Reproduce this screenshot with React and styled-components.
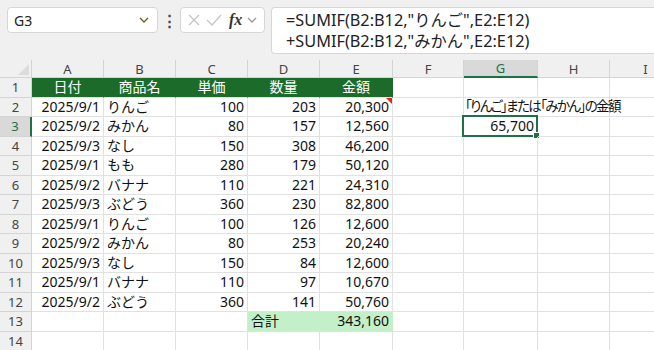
import styled, { createGlobalStyle } from "styled-components";

const GlobalStyle = createGlobalStyle`
  body {
    margin: 0;
    background: #f0f0f0;
    font-family: "Noto Sans", "Noto Sans CJK JP", sans-serif;
    overflow: hidden;
  }
`;

const COLS = ["A", "B", "C", "D", "E", "F", "G", "H", "I"];
const WIDTHS = [72, 72, 72, 72, 73, 71, 74, 72, 72];

const data = [
  ["2025/9/1", "りんご", 100, 203, "20,300"],
  ["2025/9/2", "みかん", 80, 157, "12,560"],
  ["2025/9/3", "なし", 150, 308, "46,200"],
  ["2025/9/1", "もも", 280, 179, "50,120"],
  ["2025/9/2", "バナナ", 110, 221, "24,310"],
  ["2025/9/3", "ぶどう", 360, 230, "82,800"],
  ["2025/9/1", "りんご", 100, 126, "12,600"],
  ["2025/9/2", "みかん", 80, 253, "20,240"],
  ["2025/9/3", "なし", 150, 84, "12,600"],
  ["2025/9/1", "バナナ", 110, 97, "10,670"],
  ["2025/9/2", "ぶどう", 360, 141, "50,760"],
];

const App = () => {
  const rows = [];
  // row 1: headers
  rows.push(["日付", "商品名", "単価", "数量", "金額", "", "", "", ""]);
  data.forEach((r, i) => {
    const extra =
      i === 0 ? ["", "「りんご」または「みかん」の金額", "", ""] :
      i === 1 ? ["", "65,700", "", ""] : ["", "", "", ""];
    rows.push([...r, ...extra]);
  });
  rows.push(["", "", "", "合計", "343,160", "", "", "", ""]);
  rows.push(["", "", "", "", "", "", "", "", ""]);

  const alignFor = (r, c) => {
    if (r === 1) return "center";
    if (c === 1 || c === 6) return r === 3 && c === 6 ? "right" : "left";
    if (r === 13 && c === 3) return "left";
    return "right";
  };

  const fillFor = (r, c) => {
    if (r === 1 && c < 5) return "#1d6b2a";
    if (r === 13 && (c === 3 || c === 4)) return "#c3f0c9";
    return null;
  };

  return (
    <>
      <GlobalStyle />
      <Toolbar>
        <NameBox>
          <span>G3</span>
          <Chevron viewBox="0 0 10 6" color="#6d5d1c">
            <path d="M1 1 L5 5 L9 1" />
          </Chevron>
        </NameBox>
        <Dots>⋮</Dots>
        <FxBox>
          <svg width="14" height="14" viewBox="0 0 14 14">
            <path d="M2 2 L12 12 M12 2 L2 12" stroke="#c4c4c4" strokeWidth="1.3" fill="none" />
          </svg>
          <svg width="16" height="14" viewBox="0 0 16 14">
            <path d="M1 7 L6 12 L15 2" stroke="#c4c4c4" strokeWidth="1.3" fill="none" />
          </svg>
          <FxLabel>fx</FxLabel>
          <Chevron viewBox="0 0 10 6" color="#9a9a9a">
            <path d="M1 1 L5 5 L9 1" />
          </Chevron>
        </FxBox>
        <FormulaBox>
          <div>=SUMIF(B2:B12,"りんご",E2:E12)</div>
          <div>+SUMIF(B2:B12,"みかん",E2:E12)</div>
        </FormulaBox>
      </Toolbar>

      <Sheet $widths={WIDTHS}>
        <Corner>
          <CornerTri />
        </Corner>
        {COLS.map((c) => (
          <ColHead key={c} $active={c === "G"}>{c}</ColHead>
        ))}
        {rows.map((row, ri) => {
          const r = ri + 1;
          return [
            <RowHead key={`h${r}`} $active={r === 3}>{r}</RowHead>,
            ...row.map((v, c) => (
              <Cell
                key={`${r}-${c}`}
                $align={alignFor(r, c)}
                $fill={fillFor(r, c)}
                $header={r === 1}
                $noRight={r === 2 && c === 6}
              >
                <Text $compact={r === 2 && c === 6}>{v}</Text>
                {r === 2 && c === 4 && <Comment />}
                {r === 3 && c === 6 && (
                  <Selection>
                    <Handle />
                  </Selection>
                )}
              </Cell>
            )),
          ];
        })}
      </Sheet>
    </>
  );
};

const Toolbar = styled.div`
  display: flex;
  align-items: flex-start;
  height: 54px;
  padding: 7px 0 0 7px;
  box-sizing: border-box;
  border-top: 2px solid #e4e4e4;
  margin-top: -2px;
`;

const NameBox = styled.div`
  width: 151px;
  height: 26px;
  box-sizing: border-box;
  background: #fff;
  border: 1px solid #d6d6d6;
  border-radius: 4px;
  display: flex;
  align-items: center;
  justify-content: space-between;
  padding: 0 8px 0 6px;
  font-size: 14px;
  color: #222;
`;

const Chevron = styled.svg`
  width: 10px;
  height: 6px;
  fill: none;
  stroke: ${(p) => p.color};
  stroke-width: 1.3;
`;

const Dots = styled.div`
  width: 22px;
  text-align: center;
  font-size: 15px;
  font-weight: bold;
  line-height: 26px;
  color: #444;
`;

const FxBox = styled.div`
  width: 85px;
  height: 26px;
  box-sizing: border-box;
  background: #fff;
  border: 1px solid #d6d6d6;
  border-radius: 4px;
  display: flex;
  align-items: center;
  gap: 5px;
  padding: 0 3px 0 6px;
`;

const FxLabel = styled.span`
  font-family: "Liberation Serif", "DejaVu Serif", serif;
  font-style: italic;
  font-weight: bold;
  font-size: 16px;
  color: #333;
  margin-left: 2px;
  line-height: 1;
`;

const FormulaBox = styled.div`
  margin-left: 6px;
  flex: 1;
  height: 47px;
  box-sizing: border-box;
  background: #fff;
  border: 1px solid #d6d6d6;
  border-right: none;
  border-radius: 4px 0 0 4px;
  padding: 2px 0 0 14px;
  font-size: 16.3px;
  line-height: 21px;
  color: #222;
  white-space: nowrap;
`;

const Sheet = styled.div`
  margin-top: 8px;
  display: grid;
  grid-template-columns: 32px ${(p) => p.$widths.map((w) => `${w}px`).join(" ")};
  grid-template-rows: 18px;
  grid-auto-rows: 19.5px;
  background: #fff;
  width: max-content;
`;

const Corner = styled.div`
  background: #f0f0f0;
  border-right: 1px solid #d4d4d4;
  border-bottom: 1px solid #d4d4d4;
  position: relative;
`;

const CornerTri = styled.div`
  position: absolute;
  right: 2px;
  bottom: 2px;
  width: 0;
  height: 0;
  border-left: 11px solid transparent;
  border-bottom: 11px solid #dcdcdc;
`;

const ColHead = styled.div`
  background: ${(p) => (p.$active ? "#d9d9d9" : "#f0f0f0")};
  color: ${(p) => (p.$active ? "#1e7145" : "#444")};
  border-right: 1px solid #d4d4d4;
  border-bottom: ${(p) => (p.$active ? "2px solid #1e7145" : "1px solid #d4d4d4")};
  font-size: 13px;
  display: flex;
  align-items: center;
  justify-content: center;
  box-sizing: border-box;
`;

const RowHead = styled.div`
  background: ${(p) => (p.$active ? "#d9d9d9" : "#f0f0f0")};
  color: ${(p) => (p.$active ? "#1e7145" : "#444")};
  border-right: ${(p) => (p.$active ? "2px solid #1e7145" : "1px solid #d4d4d4")};
  border-bottom: 1px solid #d4d4d4;
  font-size: 13px;
  display: flex;
  align-items: center;
  justify-content: center;
  box-sizing: border-box;
`;

const Cell = styled.div`
  position: relative;
  box-sizing: border-box;
  background: ${(p) => p.$fill || "transparent"};
  border-right: 1px solid
    ${(p) => (p.$noRight ? "transparent" : p.$fill || "#e1e1e1")};
  border-bottom: 1px solid #e1e1e1;
  color: ${(p) => (p.$header ? "#fff" : "#111")};
  font-size: 14px;
  display: flex;
  align-items: center;
  justify-content: ${(p) =>
    p.$align === "left" ? "flex-start" : p.$align === "center" ? "center" : "flex-end"};
  padding: 0 3px;
  white-space: nowrap;
  overflow: visible;
  min-width: 0;
`;

const Text = styled.span`
  line-height: 1;
  z-index: 1;
  margin-left: ${(p) => (p.$compact ? "-2px" : "0")};
  font-size: ${(p) => (p.$compact ? "13.5px" : "inherit")};
  letter-spacing: ${(p) => (p.$compact ? "-1.6px" : "normal")};
  font-feature-settings: ${(p) => (p.$compact ? '"palt"' : "normal")};
`;

const Comment = styled.div`
  position: absolute;
  top: 0;
  right: 0;
  width: 0;
  height: 0;
  border-left: 6px solid transparent;
  border-top: 6px solid #e8201a;
`;

const Selection = styled.div`
  position: absolute;
  left: -2px;
  top: -2px;
  right: -1px;
  bottom: -1px;
  border: 2px solid #1e7145;
  pointer-events: none;
`;

const Handle = styled.div`
  position: absolute;
  right: -4px;
  bottom: -4px;
  width: 5px;
  height: 5px;
  background: #1e7145;
  border: 1px solid #fff;
`;

export default App;
